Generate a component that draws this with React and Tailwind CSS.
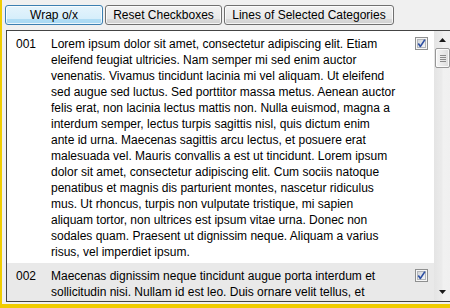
import React from "react";

const row1 = [
  "Lorem ipsum dolor sit amet, consectetur adipiscing elit. Etiam",
  "eleifend feugiat ultricies. Nam semper mi sed enim auctor",
  "venenatis. Vivamus tincidunt lacinia mi vel aliquam. Ut eleifend",
  "sed augue sed luctus. Sed porttitor massa metus. Aenean auctor",
  "felis erat, non lacinia lectus mattis non. Nulla euismod, magna a",
  "interdum semper, lectus turpis sagittis nisl, quis dictum enim",
  "ante id urna. Maecenas sagittis arcu lectus, et posuere erat",
  "malesuada vel. Mauris convallis a est ut tincidunt. Lorem ipsum",
  "dolor sit amet, consectetur adipiscing elit. Cum sociis natoque",
  "penatibus et magnis dis parturient montes, nascetur ridiculus",
  "mus. Ut rhoncus, turpis non vulputate tristique, mi sapien",
  "aliquam tortor, non ultrices est ipsum vitae urna. Donec non",
  "sodales quam. Praesent ut dignissim neque. Aliquam a varius",
  "risus, vel imperdiet ipsum.",
];

const row2 = [
  "Maecenas dignissim neque tincidunt augue porta interdum et",
  "sollicitudin nisi. Nullam id est leo. Duis ornare velit tellus, et",
];

function CheckBox() {
  return (
    <svg width="13" height="13" viewBox="0 0 13 13" className="block">
      <defs>
        <linearGradient id="cbg" x1="0" y1="0" x2="1" y2="1">
          <stop offset="0" stopColor="#cfd3d8" />
          <stop offset="1" stopColor="#f8f8f8" />
        </linearGradient>
      </defs>
      <rect x="0.5" y="0.5" width="12" height="12" fill="#f6f6f6" stroke="#8e8f8f" />
      <rect x="2.5" y="2.5" width="8" height="8" fill="url(#cbg)" stroke="#b3b6ba" />
      <path d="M3.3 6.6 L5.4 9.4 L9.9 2.6" fill="none" stroke="#2d4fa3" strokeWidth="1.7" strokeLinejoin="round" />
    </svg>
  );
}

function Row({ num, lines, bg }) {
  return (
    <div className={`flex pt-[5px] pb-[3px] ${bg}`}>
      <div className="w-[44px] pl-[9px] shrink-0 leading-[16px]">{num}</div>
      <div className="flex-1 leading-[16px]">
        {lines.map((l, i) => (
          <div key={i} className="whitespace-nowrap">{l}</div>
        ))}
      </div>
      <div className="w-[19px] shrink-0 pt-[1px]">
        <CheckBox />
      </div>
    </div>
  );
}

function Btn({ children, w, hot }) {
  return (
    <button
      className={`h-[20px] ${w} rounded-[3px] border text-[12px] leading-[18px] text-black shadow-[inset_0_0_0_1px_rgba(255,255,255,0.75)] ${
        hot
          ? "border-[#3c7fb1] bg-[linear-gradient(to_bottom,#e5f4fc_0%,#d6eefb_70%,#b0dcf4_72%,#a9d9f3_100%)]"
          : "border-[#707070] bg-[linear-gradient(to_bottom,#f2f2f2_0%,#e8e8e8_70%,#dadada_72%,#d0d0d0_100%)]"
      }`}
    >
      {children}
    </button>
  );
}

function ScrollBar() {
  return (
    <div className="w-[17px] shrink-0 flex flex-col bg-[linear-gradient(to_right,#e4e4e4_0%,#ebebeb_45%,#f1f1f1_55%,#f0f0f0_100%)]">
      <div className="h-[17px] flex items-center justify-center pt-[1px]">
        <svg width="7" height="4" viewBox="0 0 7 4"><path d="M0 4 L7 4 L3.5 0 Z" fill="#1a1a1a" /></svg>
      </div>
      <div className="h-[20px] mx-[1px] rounded-[2px] border border-[#979797] bg-[linear-gradient(to_right,#f5f5f5,#e9e9e9_50%,#dcdcdc)] shadow-[inset_0_0_0_1px_rgba(255,255,255,0.8)] flex flex-col items-center justify-center gap-[1px]">
        <div className="w-[6px] h-[1px] bg-[#8a8a8a]" />
        <div className="w-[6px] h-[1px] bg-[#8a8a8a]" />
        <div className="w-[6px] h-[1px] bg-[#8a8a8a]" />
        <div className="w-[6px] h-[1px] bg-[#8a8a8a]" />
      </div>
      <div className="flex-1" />
      <div className="h-[17px] flex items-center justify-center pb-[1px]">
        <svg width="7" height="4" viewBox="0 0 7 4"><path d="M0 0 L7 0 L3.5 4 Z" fill="#1a1a1a" /></svg>
      </div>
    </div>
  );
}

export default function App() {
  return (
    <div
      className="w-[450px] h-[308px] overflow-hidden bg-[#f0f0f0] border-l-[2px] border-b-[4px] border-[#f0cc00] flex flex-col text-[12px] text-black"
      style={{ fontFamily: '"Liberation Sans", Arial, sans-serif' }}
    >
      <div className="flex gap-[2px] pl-[3px] pt-[5px] h-[30px] shrink-0">
        <Btn w="w-[98px]" hot>Wrap o/x</Btn>
        <Btn w="w-[117px]">Reset Checkboxes</Btn>
        <Btn w="w-[170px]">Lines of Selected Categories</Btn>
      </div>
      <div className="ml-[4px] w-[446px] h-[272px] shrink-0 border border-[#444444] bg-white flex overflow-hidden">
        <div className="w-[427px] shrink-0 overflow-hidden">
          <Row num="001" lines={row1} bg="bg-white" />
          <Row num="002" lines={row2} bg="bg-[#e9e9e9]" />
        </div>
        <ScrollBar />
      </div>
    </div>
  );
}
